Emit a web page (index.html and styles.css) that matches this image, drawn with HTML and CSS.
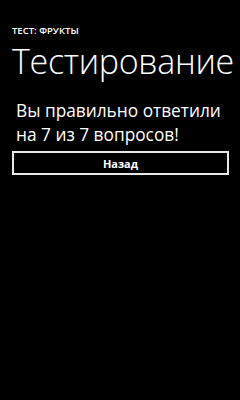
FILE: index.html
```html
<!DOCTYPE html>
<html>
<head>
<meta charset="utf-8">
<link rel="stylesheet" href="styles.css">
</head>
<body>
<div class="page">
  <div class="app-title">ТЕСТ: ФРУКТЫ</div>
  <div class="page-title">Тестирование</div>
  <div class="content">
    <div class="result">Вы правильно ответили на 7 из 7 вопросов!</div>
    <div class="btn">Назад</div>
  </div>
</div>
</body>
</html>
```
FILE: styles.css
```css
html, body {
  margin: 0;
  padding: 0;
  background: #000;
  color: #fff;
  font-family: "Open Sans", "Noto Sans", sans-serif;
}
.page {
  width: 240px;
  height: 400px;
  padding: 25px 0 0 12px;
  box-sizing: border-box;
}
.app-title {
  font-size: 9.5px;
  font-weight: 600;
  line-height: 12px;
}
.page-title {
  font-size: 34px;
  font-weight: 300;
  line-height: 40px;
  margin-top: 4px;
  letter-spacing: -0.3px;
  white-space: nowrap;
}
.content {
  padding-top: 18px;
}
.result {
  font-size: 17.3px;
  line-height: 24px;
  padding-left: 4px;
  width: 215px;
}
.btn {
  margin-top: 4px;
  width: 217px;
  height: 24px;
  box-sizing: border-box;
  border: 2px solid #e8e8e8;
  font-size: 11px;
  font-weight: 700;
  display: flex;
  align-items: center;
  justify-content: center;
}
```
